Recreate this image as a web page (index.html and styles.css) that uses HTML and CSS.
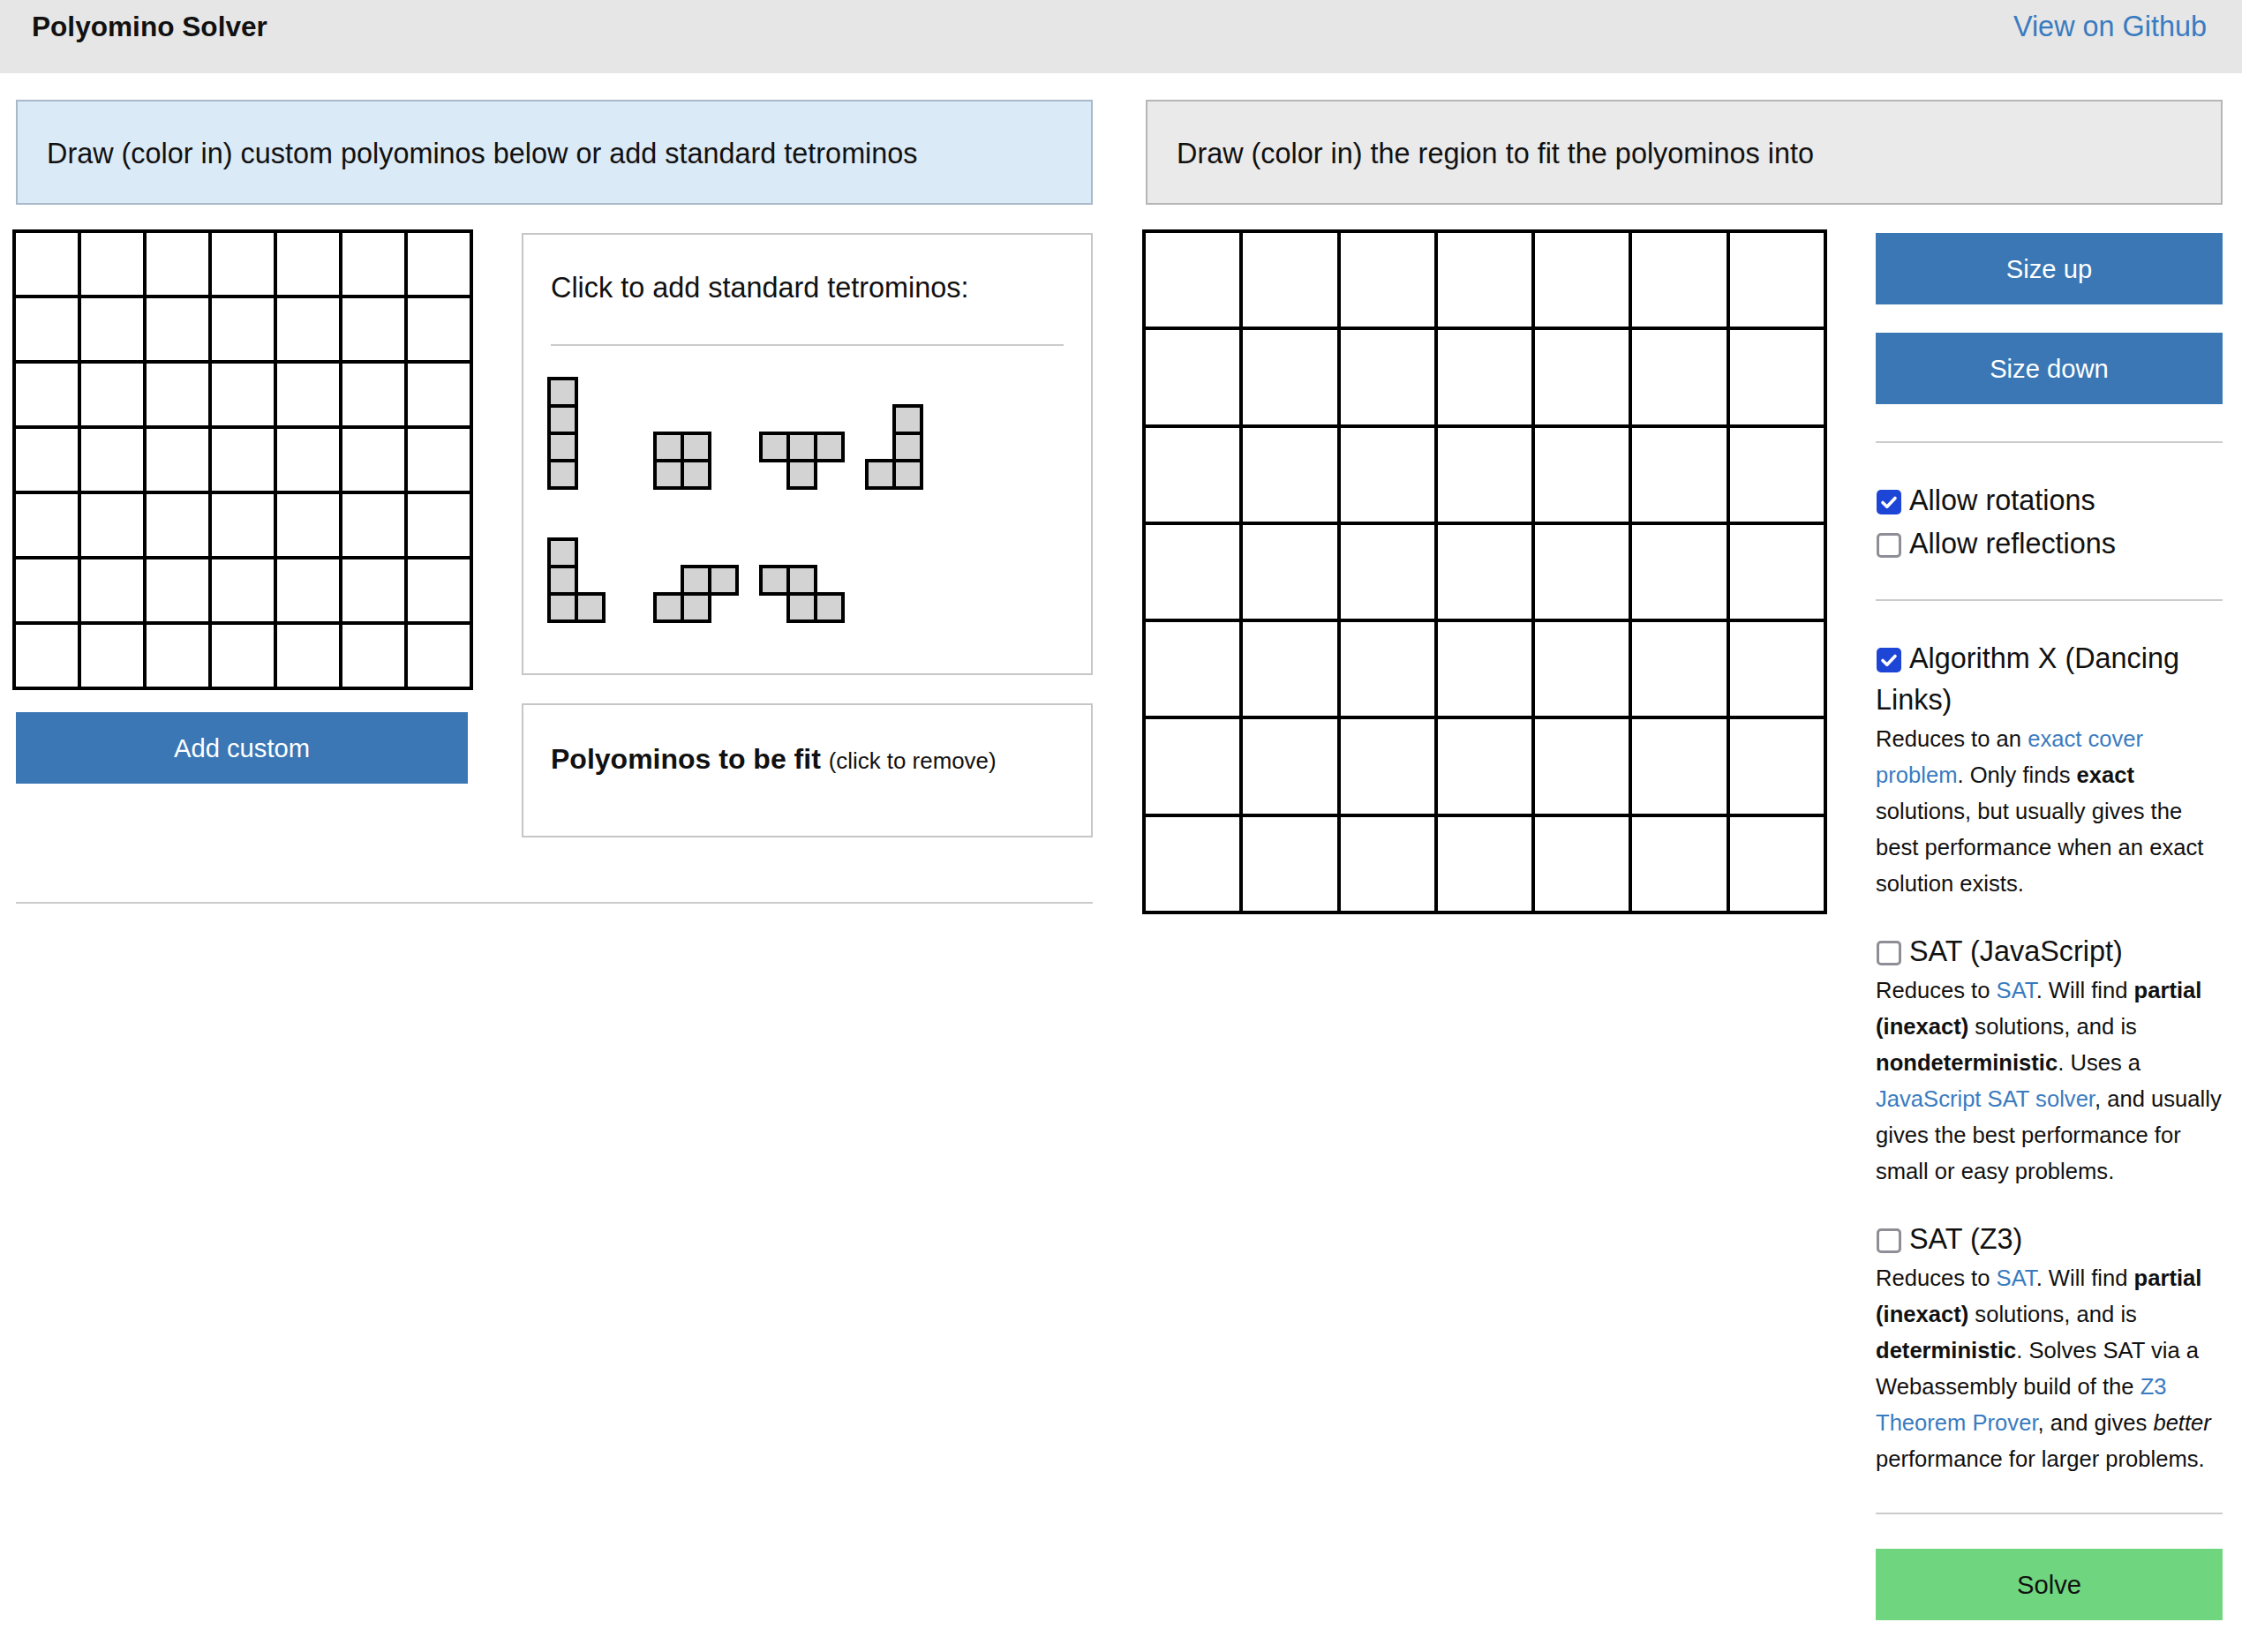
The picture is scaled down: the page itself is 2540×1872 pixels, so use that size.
FILE: index.html
```html
<!DOCTYPE html>
<html lang="en">
<head>
<meta charset="utf-8">
<title>Polyomino Solver</title>
<link rel="stylesheet" href="styles.css">
</head>
<body>
<header class="topbar">
  <div class="brand">Polyomino Solver</div>
  <a class="gh" href="#">View on Github</a>
</header>
<main class="page">
  <section class="col">
    <div class="banner banner-blue">Draw (color in) custom polyominos below or add standard tetrominos</div>
    <div class="left-row">
      <div class="draw-col">
        <div class="grid grid-small">
          <div class="cell"></div><div class="cell"></div><div class="cell"></div><div class="cell"></div><div class="cell"></div><div class="cell"></div><div class="cell"></div>
          <div class="cell"></div><div class="cell"></div><div class="cell"></div><div class="cell"></div><div class="cell"></div><div class="cell"></div><div class="cell"></div>
          <div class="cell"></div><div class="cell"></div><div class="cell"></div><div class="cell"></div><div class="cell"></div><div class="cell"></div><div class="cell"></div>
          <div class="cell"></div><div class="cell"></div><div class="cell"></div><div class="cell"></div><div class="cell"></div><div class="cell"></div><div class="cell"></div>
          <div class="cell"></div><div class="cell"></div><div class="cell"></div><div class="cell"></div><div class="cell"></div><div class="cell"></div><div class="cell"></div>
          <div class="cell"></div><div class="cell"></div><div class="cell"></div><div class="cell"></div><div class="cell"></div><div class="cell"></div><div class="cell"></div>
          <div class="cell"></div><div class="cell"></div><div class="cell"></div><div class="cell"></div><div class="cell"></div><div class="cell"></div><div class="cell"></div>
        </div>
        <button class="btn btn-blue add">Add custom</button>
      </div>
      <div class="side-col">
        <div class="panel tetro-panel">
          <div class="panel-title">Click to add standard tetrominos:</div>
          <hr class="thin tetro-hr">
          <div class="pieces">
            <div class="piece"><svg width="35" height="128" viewBox="0 0 35 128"><g class="sq"><rect x="2" y="2" width="31" height="31"/><rect x="2" y="33" width="31" height="31"/><rect x="2" y="64" width="31" height="31"/><rect x="2" y="95" width="31" height="31"/></g></svg></div>
            <div class="piece"><svg width="66" height="66" viewBox="0 0 66 66"><g class="sq"><rect x="2" y="2" width="31" height="31"/><rect x="33" y="2" width="31" height="31"/><rect x="2" y="33" width="31" height="31"/><rect x="33" y="33" width="31" height="31"/></g></svg></div>
            <div class="piece"><svg width="97" height="66" viewBox="0 0 97 66"><g class="sq"><rect x="2" y="2" width="31" height="31"/><rect x="33" y="2" width="31" height="31"/><rect x="64" y="2" width="31" height="31"/><rect x="33" y="33" width="31" height="31"/></g></svg></div>
            <div class="piece"><svg width="66" height="97" viewBox="0 0 66 97"><g class="sq"><rect x="33" y="2" width="31" height="31"/><rect x="33" y="33" width="31" height="31"/><rect x="2" y="64" width="31" height="31"/><rect x="33" y="64" width="31" height="31"/></g></svg></div>
            <div class="piece"><svg width="66" height="97" viewBox="0 0 66 97"><g class="sq"><rect x="2" y="2" width="31" height="31"/><rect x="2" y="33" width="31" height="31"/><rect x="2" y="64" width="31" height="31"/><rect x="33" y="64" width="31" height="31"/></g></svg></div>
            <div class="piece"><svg width="97" height="66" viewBox="0 0 97 66"><g class="sq"><rect x="33" y="2" width="31" height="31"/><rect x="64" y="2" width="31" height="31"/><rect x="2" y="33" width="31" height="31"/><rect x="33" y="33" width="31" height="31"/></g></svg></div>
            <div class="piece"><svg width="97" height="66" viewBox="0 0 97 66"><g class="sq"><rect x="2" y="2" width="31" height="31"/><rect x="33" y="2" width="31" height="31"/><rect x="33" y="33" width="31" height="31"/><rect x="64" y="33" width="31" height="31"/></g></svg></div>
          </div>
        </div>
        <div class="panel fit-panel">
          <span class="fit-title">Polyominos to be fit</span> <span class="fit-note">(click to remove)</span>
        </div>
      </div>
    </div>
    <hr class="rule">
  </section>

  <section class="col">
    <div class="banner banner-gray">Draw (color in) the region to fit the polyominos into</div>
    <div class="right-row">
      <div class="grid grid-big">
        <div class="cell"></div><div class="cell"></div><div class="cell"></div><div class="cell"></div><div class="cell"></div><div class="cell"></div><div class="cell"></div>
        <div class="cell"></div><div class="cell"></div><div class="cell"></div><div class="cell"></div><div class="cell"></div><div class="cell"></div><div class="cell"></div>
        <div class="cell"></div><div class="cell"></div><div class="cell"></div><div class="cell"></div><div class="cell"></div><div class="cell"></div><div class="cell"></div>
        <div class="cell"></div><div class="cell"></div><div class="cell"></div><div class="cell"></div><div class="cell"></div><div class="cell"></div><div class="cell"></div>
        <div class="cell"></div><div class="cell"></div><div class="cell"></div><div class="cell"></div><div class="cell"></div><div class="cell"></div><div class="cell"></div>
        <div class="cell"></div><div class="cell"></div><div class="cell"></div><div class="cell"></div><div class="cell"></div><div class="cell"></div><div class="cell"></div>
        <div class="cell"></div><div class="cell"></div><div class="cell"></div><div class="cell"></div><div class="cell"></div><div class="cell"></div><div class="cell"></div>
      </div>
      <div class="controls">
        <button class="btn btn-blue">Size up</button>
        <button class="btn btn-blue size-down">Size down</button>
        <hr class="thin ctl-hr1">
        <div class="opts">
          <label class="opt"><span class="cb checked"><svg width="28" height="28" viewBox="0 0 28 28"><polyline points="7,14.5 11.8,19.2 21,9.5"/></svg></span>Allow rotations</label>
          <label class="opt"><span class="cb"></span>Allow reflections</label>
        </div>
        <hr class="thin ctl-hr2">
        <div class="algo">
          <label class="algo-label"><span class="cb checked"><svg width="28" height="28" viewBox="0 0 28 28"><polyline points="7,14.5 11.8,19.2 21,9.5"/></svg></span>Algorithm X (Dancing Links)</label>
          <p class="desc">Reduces to an <a href="#">exact cover problem</a>. Only finds <b>exact</b> solutions, but usually gives the best performance when an exact solution exists.</p>
        </div>
        <div class="algo">
          <label class="algo-label"><span class="cb"></span>SAT (JavaScript)</label>
          <p class="desc">Reduces to <a href="#">SAT</a>. Will find <b>partial (inexact)</b> solutions, and is <b>nondeterministic</b>. Uses a <a href="#">JavaScript SAT solver</a>, and usually gives the best performance for small or easy problems.</p>
        </div>
        <div class="algo">
          <label class="algo-label"><span class="cb"></span>SAT (Z3)</label>
          <p class="desc">Reduces to <a href="#">SAT</a>. Will find <b>partial (inexact)</b> solutions, and is <b>deterministic</b>. Solves SAT via a Webassembly build of the <a href="#">Z3 Theorem Prover</a>, and gives <i>better</i> performance for larger problems.</p>
        </div>
        <hr class="thin ctl-hr3">
        <button class="btn btn-green">Solve</button>
      </div>
    </div>
  </section>
</main>
</body>
</html>
```

FILE: styles.css
```css
* {
  box-sizing: border-box;
}

html, body {
  background: #ffffff;
}

body {
  margin: 0;
  font-family: "Liberation Sans", Arial, Helvetica, sans-serif;
  color: #111111;
}

a {
  color: #3a7bbf;
  text-decoration: none;
}

/* ---------- header ---------- */
.topbar {
  height: 83px;
  background: #e6e6e6;
  display: flex;
  justify-content: space-between;
  align-items: flex-start;
  padding: 12px 40px 0 36px;
  font-size: 32.4px;
  line-height: 37px;
}

.brand {
  font-weight: bold;
  font-size: 31.6px;
  color: #111111;
}

/* ---------- page columns ---------- */
.page {
  display: grid;
  grid-template-columns: 1220px 1220px;
  column-gap: 60px;
  padding: 30px 0 0 18px;
}

.banner {
  height: 119px;
  display: flex;
  align-items: center;
  padding: 3px 33px 0;
  font-size: 32.4px;
  border: 2px solid;
}

.banner-blue {
  background: #dbeaf7;
  border-color: #a9b9c9;
}

.banner-gray {
  background: #eaeaea;
  border-color: #b6b6b6;
}

/* ---------- drawing grids ---------- */
.grid {
  display: grid;
  gap: 4px;
  padding: 4px;
  background: #000000;
  margin: -4px 0 0 -4px;
  flex: none;
}

.grid-small {
  grid-template-columns: repeat(7, 70px);
  grid-auto-rows: 70px;
  width: 522px;
}

.grid-big {
  grid-template-columns: repeat(7, 1fr);
  grid-template-rows: repeat(7, 1fr);
  width: 776px;
  height: 776px;
}

.cell {
  background: #ffffff;
}

/* ---------- buttons ---------- */
.btn {
  display: flex;
  align-items: center;
  justify-content: center;
  width: 100%;
  height: 81px;
  border: 0;
  padding: 2px 0 0;
  font-family: inherit;
  font-size: 29.2px;
}

.btn-blue {
  background: #3a77b4;
  color: #ffffff;
}

.btn-green {
  background: #6fd67f;
  color: #111111;
}

/* ---------- left column ---------- */
.left-row {
  display: flex;
  gap: 61px;
  margin-top: 32px;
}

.draw-col {
  width: 512px;
  flex: none;
}

.add {
  margin-top: 25px;
}

.side-col {
  width: 647px;
  flex: none;
}

.panel {
  border: 2px solid #c6c6c6;
  padding: 0 31px;
}

.tetro-panel {
  padding-top: 42px;
  padding-bottom: 57px;
}

.panel-title {
  font-size: 32.4px;
  line-height: 37px;
}

.thin {
  border: 0;
  height: 2px;
  background: #cbcbcb;
  margin: 0;
}

.tetro-hr {
  margin: 45px 0 35px;
}

.pieces {
  display: flex;
  flex-wrap: wrap;
  align-items: flex-end;
  row-gap: 54px;
  margin-left: -4px;
}

.piece {
  width: 120px;
}

.piece svg {
  display: block;
}

.sq rect {
  fill: #d3d3d3;
  stroke: #000000;
  stroke-width: 4;
}

.fit-panel {
  margin-top: 32px;
  height: 152px;
  padding-top: 43px;
  font-size: 32px;
  line-height: 37px;
}

.fit-title {
  font-weight: bold;
  font-size: 32px;
}

.fit-note {
  font-size: 25.9px;
}

.rule {
  border: 0;
  height: 2px;
  background: #cbcbcb;
  margin: 73px 0 0;
}

/* ---------- right column ---------- */
.right-row {
  display: flex;
  margin-top: 32px;
}

.controls {
  width: 393px;
  margin-left: 55px;
  flex: none;
}

.size-down {
  margin-top: 32px;
}

.ctl-hr1 {
  margin: 42px 0 39px;
}

.opts {
  padding-top: 2px;
}

.ctl-hr2 {
  margin: 39px 0 40px;
}

.ctl-hr3 {
  margin: 40px 0 39px;
}

.opt {
  display: block;
  font-size: 32.4px;
  line-height: 48.6px;
}

.algo + .algo {
  margin-top: 31px;
}

.algo-label {
  display: block;
  padding-top: 2px;
  font-size: 32.4px;
  line-height: 47px;
}

.cb {
  display: inline-block;
  width: 28px;
  height: 28px;
  margin: 0 9px 0 1px;
  vertical-align: -5px;
  border-radius: 5px;
  border: 3.5px solid #8e8e96;
  background: #ffffff;
}

.cb.checked {
  border: 0;
  background: #1d45d6;
}

.cb svg {
  display: block;
}

.cb polyline {
  fill: none;
  stroke: #ffffff;
  stroke-width: 3.6;
  stroke-linecap: round;
  stroke-linejoin: round;
}

.desc {
  margin: 0 -8px 0 0;
  font-size: 25.6px;
  line-height: 41px;
}
```
